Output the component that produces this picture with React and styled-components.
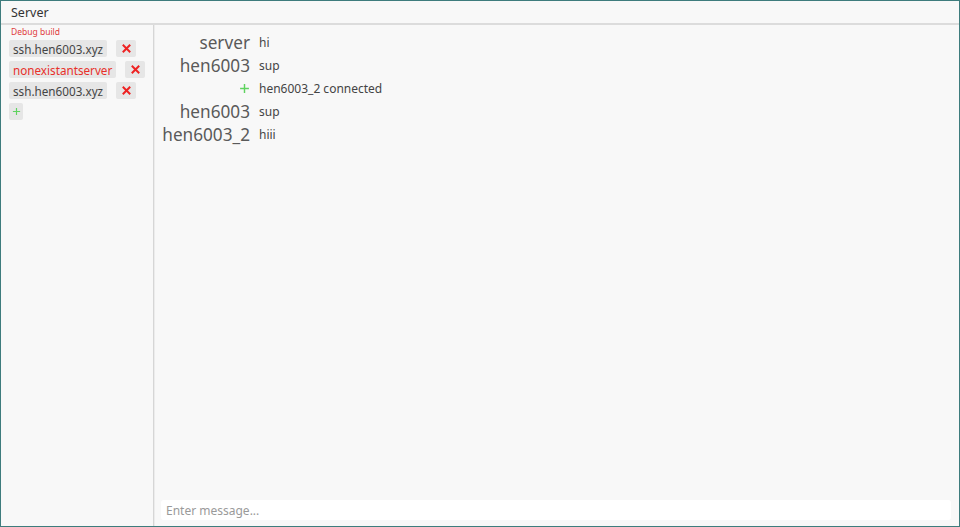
import React from "react";
import styled, { createGlobalStyle } from "styled-components";

const Global = createGlobalStyle`
  html, body { margin: 0; padding: 0; height: 100%; }
  body { font-family: "Noto Sans", "DejaVu Sans", sans-serif; background: #f8f8f8; }
  #root { height: 100%; }
`;

const Window = styled.div`
  box-sizing: border-box;
  width: 960px;
  height: 527px;
  border: 1px solid #3e7c7d;
  background: #f8f8f8;
  display: flex;
  flex-direction: column;
`;

const Header = styled.div`
  height: 22px;
  border-bottom: 2px solid #dcdcdc;
  display: flex;
  align-items: center;
  padding-left: 10px;
  font-size: 12.5px;
  color: #333;
`;

const Body = styled.div`
  flex: 1;
  display: flex;
  min-height: 0;
`;

const Sidebar = styled.div`
  width: 153px;
  border-right: 1px solid #d6d6d6;
  box-shadow: 1px 0 0 #ececec;
  padding: 1px 0 0 8px;
  box-sizing: border-box;
  display: flex;
  flex-direction: column;
  gap: 4px;
`;

const Debug = styled.div`
  font-size: 8.5px;
  color: #e03c3c;
  padding-left: 2px;
  line-height: 12px;
  margin-bottom: -2px;
`;

const ServerRow = styled.div`
  display: flex;
  align-items: center;
  gap: 9px;
`;

const Chip = styled.div`
  height: 17px;
  background: #e6e6e6;
  border-radius: 2px;
  padding: 0 4px;
  display: flex;
  align-items: center;
  font-size: 11.7px;
  color: ${(p) => (p.$error ? "#e8302a" : "#444")};
`;

const IconBtn = styled.div`
  width: 20px;
  height: 17px;
  background: #e6e6e6;
  border-radius: 2px;
  display: flex;
  align-items: center;
  justify-content: center;
`;

const AddBtn = styled(IconBtn)`
  width: 14px;
`;

const Main = styled.div`
  flex: 1;
  display: flex;
  flex-direction: column;
  padding: 6px 8px 6px 7px;
  min-width: 0;
`;

const Messages = styled.div`
  flex: 1;
  display: grid;
  grid-template-columns: 89px 1fr;
  grid-auto-rows: 23px;
  column-gap: 9px;
  align-content: start;
`;

const Name = styled.div`
  text-align: right;
  font-size: 17.2px;
  color: #5a5a5a;
  display: flex;
  align-items: center;
  justify-content: flex-end;
  white-space: nowrap;
`;

const Text = styled.div`
  font-size: 12px;
  color: #444;
  display: flex;
  align-items: center;
`;

const Input = styled.input`
  height: 20px;
  border: none;
  outline: none;
  background: #fff;
  border-radius: 3px;
  padding: 0 5px;
  font-family: inherit;
  font-size: 12px;
  color: #444;
  &::placeholder { color: #9a9a9a; }
`;

const Cross = () => (
  <svg width="9" height="9" viewBox="0 0 9 9">
    <path d="M1.5 1.5 L7.5 7.5 M7.5 1.5 L1.5 7.5" stroke="#ee2222" strokeWidth="2" strokeLinecap="square" />
  </svg>
);

const Plus = ({ size = 10 }) => (
  <svg width={size} height={size} viewBox="0 0 10 10">
    <path d="M5 1 V9 M1 5 H9" stroke="#5fd35f" strokeWidth="1.3" />
  </svg>
);

const servers = [
  { name: "ssh.hen6003.xyz" },
  { name: "nonexistantserver", error: true },
  { name: "ssh.hen6003.xyz" },
];

const messages = [
  { name: "server", text: "hi" },
  { name: "hen6003", text: "sup" },
  { join: true, text: "hen6003_2 connected" },
  { name: "hen6003", text: "sup" },
  { name: "hen6003_2", text: "hiii" },
];

export default function App() {
  return (
    <>
      <Global />
      <Window>
        <Header>Server</Header>
        <Body>
          <Sidebar>
            <Debug>Debug build</Debug>
            {servers.map((s, i) => (
              <ServerRow key={i}>
                <Chip $error={s.error}>{s.name}</Chip>
                <IconBtn><Cross /></IconBtn>
              </ServerRow>
            ))}
            <ServerRow>
              <AddBtn><Plus size={9} /></AddBtn>
            </ServerRow>
          </Sidebar>
          <Main>
            <Messages>
              {messages.map((m, i) => (
                <React.Fragment key={i}>
                  <Name>{m.join ? <Plus size={11} /> : m.name}</Name>
                  <Text>{m.text}</Text>
                </React.Fragment>
              ))}
            </Messages>
            <Input placeholder="Enter message..." />
          </Main>
        </Body>
      </Window>
    </>
  );
}
